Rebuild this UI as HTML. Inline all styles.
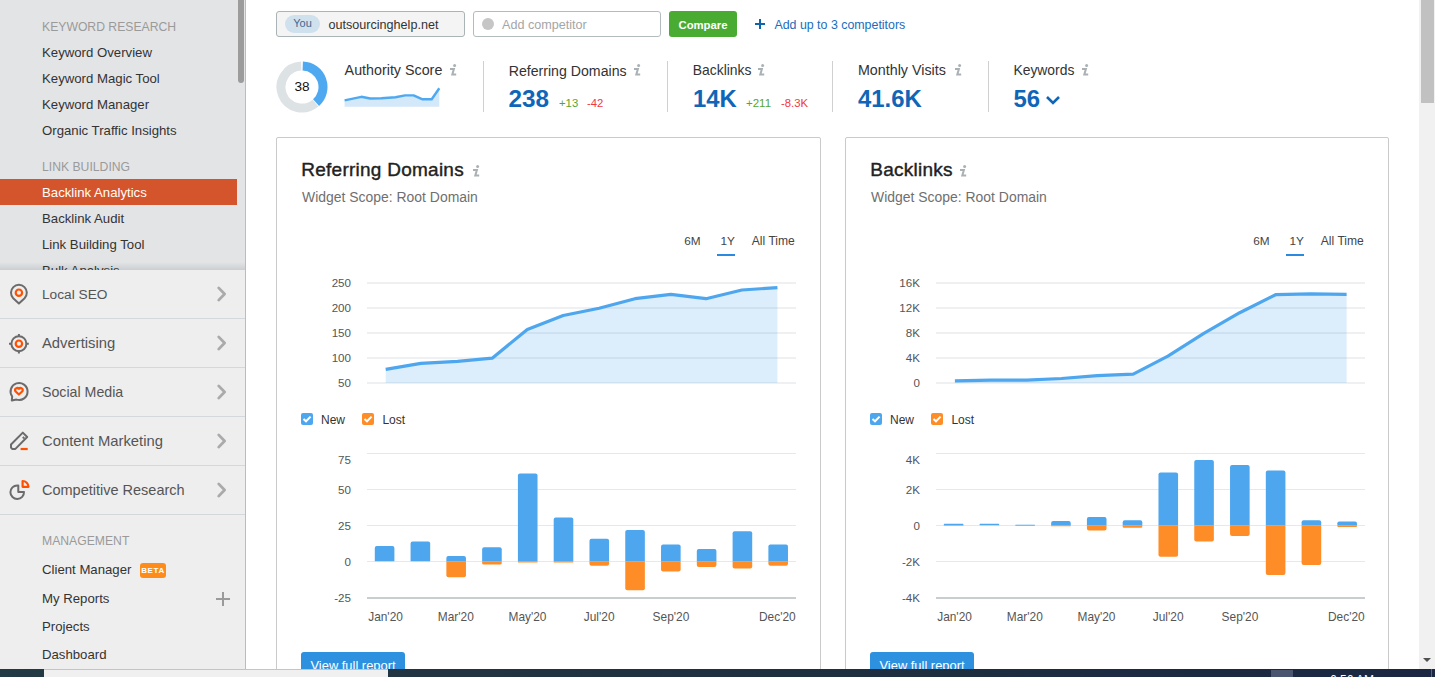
<!DOCTYPE html>
<html><head><meta charset="utf-8"><title>Backlink Analytics</title>
<style>
html,body{margin:0;padding:0;}
body{width:1435px;height:677px;overflow:hidden;position:relative;background:#fff;font-family:"Liberation Sans", sans-serif;}
.t{position:absolute;white-space:nowrap;line-height:1;}
</style></head><body>
<div style="position:absolute;left:0px;top:0px;width:245px;height:669px;background:#eeeeee;"></div>
<div style="position:absolute;left:0px;top:0px;width:245px;height:270px;background:#e3e4e6;"></div>
<div style="position:absolute;left:0px;top:262px;width:245px;height:8px;background:linear-gradient(rgba(200,205,208,0),rgba(195,200,203,0.75));"></div>
<div style="position:absolute;left:245px;top:0px;width:1px;height:669px;background:#bcbcbc;"></div>
<div style="position:absolute;left:238px;top:0px;width:6px;height:83px;background:#9c9c9c;border-radius:0 0 3px 3px;"></div>
<div class="t" style="left:42.00px;top:21.17px;font-size:12.2px;color:#9a9a9a;font-weight:400;font-family:'Liberation Sans', sans-serif;">KEYWORD RESEARCH</div>
<div class="t" style="left:42.00px;top:46.33px;font-size:13.2px;color:#333333;font-weight:400;font-family:'Liberation Sans', sans-serif;">Keyword Overview</div>
<div class="t" style="left:42.00px;top:72.33px;font-size:13.2px;color:#333333;font-weight:400;font-family:'Liberation Sans', sans-serif;">Keyword Magic Tool</div>
<div class="t" style="left:42.00px;top:98.33px;font-size:13.2px;color:#333333;font-weight:400;font-family:'Liberation Sans', sans-serif;">Keyword Manager</div>
<div class="t" style="left:42.00px;top:124.33px;font-size:13.2px;color:#333333;font-weight:400;font-family:'Liberation Sans', sans-serif;">Organic Traffic Insights</div>
<div class="t" style="left:42.00px;top:161.17px;font-size:12.2px;color:#9a9a9a;font-weight:400;font-family:'Liberation Sans', sans-serif;">LINK BUILDING</div>
<div style="position:absolute;left:0px;top:179px;width:237px;height:26px;background:#d4552b;"></div>
<div class="t" style="left:42.00px;top:185.83px;font-size:13.2px;color:#ffffff;font-weight:400;font-family:'Liberation Sans', sans-serif;">Backlink Analytics</div>
<div class="t" style="left:42.00px;top:212.33px;font-size:13.2px;color:#333333;font-weight:400;font-family:'Liberation Sans', sans-serif;">Backlink Audit</div>
<div class="t" style="left:42.00px;top:238.33px;font-size:13.2px;color:#333333;font-weight:400;font-family:'Liberation Sans', sans-serif;">Link Building Tool</div>
<div style="position:absolute;left:0;top:262px;width:237px;height:8px;overflow:hidden"><div class="t" style="left:42px;top:1.83px;font-size:13.2px;color:#333">Bulk Analysis</div></div>
<div class="t" style="left:42.00px;top:287.90px;font-size:13.7px;color:#555555;font-weight:400;font-family:'Liberation Sans', sans-serif;">Local SEO</div>
<div style="position:absolute;left:0px;top:318px;width:245px;height:1px;background:#d3d8db;"></div>
<svg style="position:absolute;left:210px;top:284px" width="24" height="20" viewBox="0 0 24 20"><path d="M8.7 3.9 L14.6 10 L8.7 16.1" fill="none" stroke="#aaaaaa" stroke-width="2.8" stroke-linecap="round" stroke-linejoin="round"/></svg>
<div class="t" style="left:42.00px;top:335.97px;font-size:14.8px;color:#555555;font-weight:400;font-family:'Liberation Sans', sans-serif;">Advertising</div>
<div style="position:absolute;left:0px;top:367px;width:245px;height:1px;background:#d3d8db;"></div>
<svg style="position:absolute;left:210px;top:333px" width="24" height="20" viewBox="0 0 24 20"><path d="M8.7 3.9 L14.6 10 L8.7 16.1" fill="none" stroke="#aaaaaa" stroke-width="2.8" stroke-linecap="round" stroke-linejoin="round"/></svg>
<div class="t" style="left:42.00px;top:385.48px;font-size:14.2px;color:#555555;font-weight:400;font-family:'Liberation Sans', sans-serif;">Social Media</div>
<div style="position:absolute;left:0px;top:416px;width:245px;height:1px;background:#d3d8db;"></div>
<svg style="position:absolute;left:210px;top:382px" width="24" height="20" viewBox="0 0 24 20"><path d="M8.7 3.9 L14.6 10 L8.7 16.1" fill="none" stroke="#aaaaaa" stroke-width="2.8" stroke-linecap="round" stroke-linejoin="round"/></svg>
<div class="t" style="left:42.00px;top:433.97px;font-size:14.8px;color:#555555;font-weight:400;font-family:'Liberation Sans', sans-serif;">Content Marketing</div>
<div style="position:absolute;left:0px;top:465px;width:245px;height:1px;background:#d3d8db;"></div>
<svg style="position:absolute;left:210px;top:431px" width="24" height="20" viewBox="0 0 24 20"><path d="M8.7 3.9 L14.6 10 L8.7 16.1" fill="none" stroke="#aaaaaa" stroke-width="2.8" stroke-linecap="round" stroke-linejoin="round"/></svg>
<div class="t" style="left:42.00px;top:483.23px;font-size:14.5px;color:#555555;font-weight:400;font-family:'Liberation Sans', sans-serif;">Competitive Research</div>
<div style="position:absolute;left:0px;top:514px;width:245px;height:1px;background:#d3d8db;"></div>
<svg style="position:absolute;left:210px;top:480px" width="24" height="20" viewBox="0 0 24 20"><path d="M8.7 3.9 L14.6 10 L8.7 16.1" fill="none" stroke="#aaaaaa" stroke-width="2.8" stroke-linecap="round" stroke-linejoin="round"/></svg>
<svg style="position:absolute;left:0;top:270px" width="40" height="49" viewBox="0 0 40 49"><path d="M18.9 33.5 L13.2 28.2 A7.9 7.9 0 1 1 24.6 28.2 Z" fill="none" stroke="#6b6b6b" stroke-width="2" stroke-linejoin="round"/><circle cx="18.9" cy="22.7" r="3.2" fill="none" stroke="#ff5000" stroke-width="2.2"/></svg>
<svg style="position:absolute;left:0;top:319px" width="40" height="49" viewBox="0 0 40 49"><circle cx="18.9" cy="24.7" r="7.5" fill="none" stroke="#6b6b6b" stroke-width="2"/><path d="M18.9 15 V18 M18.9 31.5 V34.5 M9 24.7 H12 M25.8 24.7 H28.8" stroke="#6b6b6b" stroke-width="2"/><circle cx="18.9" cy="24.7" r="3.2" fill="none" stroke="#ff5000" stroke-width="2.2"/></svg>
<svg style="position:absolute;left:0;top:367px" width="40" height="49" viewBox="0 0 40 49"><path d="M12.2 29.5 A8.5 8.5 0 1 1 16.5 32.6 L11.8 33.6 Z" fill="none" stroke="#6b6b6b" stroke-width="2" stroke-linejoin="round"/><path d="M18.9 27.5 L15.4 24.2 A2.1 2.1 0 0 1 18.9 21.9 A2.1 2.1 0 0 1 22.4 24.2 Z" fill="none" stroke="#ff5000" stroke-width="2.2" stroke-linejoin="round"/></svg>
<svg style="position:absolute;left:0;top:417px" width="40" height="49" viewBox="0 0 40 49"><path d="M11 30.5 L11 27.5 L22.8 15.6 L27.2 20 L15.4 31.9 L12.2 31.9 Z M22.8 20 L24.2 21.4" fill="none" stroke="#6b6b6b" stroke-width="2" stroke-linejoin="round"/><path d="M20.6 32 H27.7" stroke="#ff5000" stroke-width="2.2"/></svg>
<svg style="position:absolute;left:0;top:466px" width="40" height="49" viewBox="0 0 40 49"><path d="M17.3 19.4 A6.8 6.8 0 1 0 24 25.9 L18.3 25.9 L18.3 19.4 Z" fill="none" stroke="#6b6b6b" stroke-width="2" stroke-linejoin="round"/><path d="M22.6 15 A6 6 0 0 1 28.5 20.8 L22.6 20.8 Z" fill="none" stroke="#ff5000" stroke-width="2.2" stroke-linejoin="round"/></svg>
<div class="t" style="left:42.00px;top:535.17px;font-size:12.2px;color:#9a9a9a;font-weight:400;font-family:'Liberation Sans', sans-serif;">MANAGEMENT</div>
<div class="t" style="left:42.00px;top:563.03px;font-size:13.2px;color:#333333;font-weight:400;font-family:'Liberation Sans', sans-serif;">Client Manager</div>
<div style="position:absolute;left:140px;top:563px;width:26px;height:15px;background:#ff8c1a;border-radius:3px;color:#fff;font-family:'Liberation Sans';font-weight:700;font-size:8px;line-height:15px;text-align:center;letter-spacing:0.6px">BETA</div>
<div class="t" style="left:42.00px;top:592.13px;font-size:13.2px;color:#333333;font-weight:400;font-family:'Liberation Sans', sans-serif;">My Reports</div>
<div style="position:absolute;left:215.5px;top:597.5px;width:14px;height:2px;background:#9a9a9a;"></div>
<div style="position:absolute;left:221.5px;top:591.5px;width:2px;height:14px;background:#9a9a9a;"></div>
<div class="t" style="left:42.00px;top:620.33px;font-size:13.2px;color:#333333;font-weight:400;font-family:'Liberation Sans', sans-serif;">Projects</div>
<div class="t" style="left:42.00px;top:648.33px;font-size:13.2px;color:#333333;font-weight:400;font-family:'Liberation Sans', sans-serif;">Dashboard</div>
<div style="position:absolute;left:276px;top:11px;width:187px;height:24px;background:#f4f4f4;border:1px solid #aab3b6;border-radius:3px;"></div>
<div style="position:absolute;left:285px;top:15px;width:35px;height:18px;background:#d0e1ee;border-radius:9px;"></div>
<div class="t" style="left:302.50px;transform:translateX(-50%);top:18.19px;font-size:11px;color:#41688f;font-weight:400;font-family:'Liberation Sans', sans-serif;">You</div>
<div class="t" style="left:328.50px;top:19.03px;font-size:12.6px;color:#333;font-weight:400;font-family:'Liberation Sans', sans-serif;">outsourcinghelp.net</div>
<div style="position:absolute;left:473px;top:11px;width:186px;height:24px;background:#fff;border:1px solid #b4bbbe;border-radius:3px;"></div>
<div style="position:absolute;left:482px;top:18px;width:12px;height:12px;border-radius:50%;background:#c6c6c6"></div>
<div class="t" style="left:502.00px;top:19.03px;font-size:12.6px;color:#a5a5a5;font-weight:400;font-family:'Liberation Sans', sans-serif;">Add competitor</div>
<div style="position:absolute;left:669px;top:11px;width:68px;height:26px;background:#4aab33;border-radius:3px;"></div>
<div class="t" style="left:703.00px;transform:translateX(-50%);top:19.93px;font-size:11.3px;color:#ffffff;font-weight:700;font-family:'Liberation Sans', sans-serif;">Compare</div>
<div style="position:absolute;left:755px;top:23px;width:10px;height:2px;background:#0e63ad;"></div>
<div style="position:absolute;left:759px;top:19px;width:2px;height:10px;background:#0e63ad;"></div>
<div class="t" style="left:774.40px;top:19.10px;font-size:12.4px;color:#1a6dbd;font-weight:400;font-family:'Liberation Sans', sans-serif;">Add up to 3 competitors</div>
<svg style="position:absolute;left:276px;top:61px" width="52" height="52" viewBox="0 0 52 52"><path d="M39.50 42.09 A21 21 0 1 1 25.27 5.01" fill="none" stroke="#dde2e5" stroke-width="9"/><path d="M26.73 5.01 A21 21 0 0 1 40.05 41.61" fill="none" stroke="#4fa9f1" stroke-width="9"/></svg>
<div class="t" style="left:302.00px;transform:translateX(-50%);top:80.49px;font-size:13.6px;color:#111;font-weight:400;font-family:'Liberation Sans', sans-serif;">38</div>
<div class="t" style="left:344.60px;top:63.40px;font-size:14.3px;color:#333;font-weight:400;font-family:'Liberation Sans', sans-serif;">Authority Score</div>
<svg style="position:absolute;left:450px;top:64px" width="8" height="12" viewBox="0 0 8 12"><circle cx="4.6" cy="1.6" r="1.5" fill="#a9b1b4"/><path d="M0 5.1 H3.9 L2.3 10.5 H6.2" fill="none" stroke="#a9b1b4" stroke-width="2"/></svg>
<svg style="position:absolute;left:340px;top:80px" width="110" height="30"><polygon points="4.6,20.3 21.3,16.8 30.3,18.5 41.5,18.2 55.4,17.2 65.2,15.4 73.6,15.4 82.6,19.3 91.7,19.3 99.3,8.2 99.3,26.8 4.6,26.8" fill="#d3e8f8"/><polyline points="4.6,20.3 21.3,16.8 30.3,18.5 41.5,18.2 55.4,17.2 65.2,15.4 73.6,15.4 82.6,19.3 91.7,19.3 99.3,8.2" fill="none" stroke="#4fa9f1" stroke-width="2.4" stroke-linejoin="round"/></svg>
<div style="position:absolute;left:483px;top:61px;width:1px;height:51px;background:#d0d0d0;"></div>
<div style="position:absolute;left:667px;top:61px;width:1px;height:51px;background:#d0d0d0;"></div>
<div style="position:absolute;left:832px;top:61px;width:1px;height:51px;background:#d0d0d0;"></div>
<div style="position:absolute;left:988px;top:61px;width:1px;height:51px;background:#d0d0d0;"></div>
<div class="t" style="left:508.70px;top:63.52px;font-size:14.15px;color:#333;font-weight:400;font-family:'Liberation Sans', sans-serif;">Referring Domains</div>
<svg style="position:absolute;left:634px;top:64px" width="8" height="12" viewBox="0 0 8 12"><circle cx="4.6" cy="1.6" r="1.5" fill="#a9b1b4"/><path d="M0 5.1 H3.9 L2.3 10.5 H6.2" fill="none" stroke="#a9b1b4" stroke-width="2"/></svg>
<div class="t" style="left:508.50px;top:86.73px;font-size:24.3px;color:#0f66b8;font-weight:700;font-family:'Liberation Sans', sans-serif;">238</div>
<div class="t" style="left:559.00px;top:97.73px;font-size:11.3px;color:#55a630;font-weight:400;font-family:'Liberation Sans', sans-serif;">+13</div>
<div class="t" style="left:587.00px;top:97.73px;font-size:11.3px;color:#f0383f;font-weight:400;font-family:'Liberation Sans', sans-serif;">-42</div>
<div class="t" style="left:692.80px;top:63.73px;font-size:13.9px;color:#333;font-weight:400;font-family:'Liberation Sans', sans-serif;">Backlinks</div>
<svg style="position:absolute;left:758px;top:64px" width="8" height="12" viewBox="0 0 8 12"><circle cx="4.6" cy="1.6" r="1.5" fill="#a9b1b4"/><path d="M0 5.1 H3.9 L2.3 10.5 H6.2" fill="none" stroke="#a9b1b4" stroke-width="2"/></svg>
<div class="t" style="left:693.00px;top:87.15px;font-size:23.8px;color:#0f66b8;font-weight:700;font-family:'Liberation Sans', sans-serif;">14K</div>
<div class="t" style="left:746.00px;top:97.57px;font-size:11.5px;color:#55a630;font-weight:400;font-family:'Liberation Sans', sans-serif;">+211</div>
<div class="t" style="left:781.00px;top:97.73px;font-size:11.3px;color:#f0383f;font-weight:400;font-family:'Liberation Sans', sans-serif;">-8.3K</div>
<div class="t" style="left:857.90px;top:63.40px;font-size:14.3px;color:#333;font-weight:400;font-family:'Liberation Sans', sans-serif;">Monthly Visits</div>
<svg style="position:absolute;left:955px;top:64px" width="8" height="12" viewBox="0 0 8 12"><circle cx="4.6" cy="1.6" r="1.5" fill="#a9b1b4"/><path d="M0 5.1 H3.9 L2.3 10.5 H6.2" fill="none" stroke="#a9b1b4" stroke-width="2"/></svg>
<div class="t" style="left:858.00px;top:87.07px;font-size:23.9px;color:#0f66b8;font-weight:700;font-family:'Liberation Sans', sans-serif;">41.6K</div>
<div class="t" style="left:1013.40px;top:63.73px;font-size:13.9px;color:#333;font-weight:400;font-family:'Liberation Sans', sans-serif;">Keywords</div>
<svg style="position:absolute;left:1082px;top:64px" width="8" height="12" viewBox="0 0 8 12"><circle cx="4.6" cy="1.6" r="1.5" fill="#a9b1b4"/><path d="M0 5.1 H3.9 L2.3 10.5 H6.2" fill="none" stroke="#a9b1b4" stroke-width="2"/></svg>
<div class="t" style="left:1013.50px;top:87.07px;font-size:23.9px;color:#0f66b8;font-weight:700;font-family:'Liberation Sans', sans-serif;">56</div>
<svg style="position:absolute;left:1045px;top:94px" width="16" height="12"><path d="M2 3 L8 9 L14 3" fill="none" stroke="#0f66b8" stroke-width="2.6"/></svg>
<div style="position:absolute;left:276px;top:137px;width:545px;height:560px;background:#fff;border:1px solid #cacaca;border-radius:2px;box-sizing:border-box;"></div>
<div class="t" style="left:301.30px;top:159.62px;font-size:19px;color:#222;font-weight:400;font-family:'Liberation Sans', sans-serif;-webkit-text-stroke:0.4px #222;letter-spacing:0.25px;">Referring Domains</div>
<svg style="position:absolute;left:473px;top:165px" width="8" height="12" viewBox="0 0 8 12"><circle cx="4.6" cy="1.6" r="1.5" fill="#a9b1b4"/><path d="M0 5.1 H3.9 L2.3 10.5 H6.2" fill="none" stroke="#a9b1b4" stroke-width="2"/></svg>
<div class="t" style="left:302.00px;top:190.99px;font-size:13.95px;color:#6f6f6f;font-weight:400;font-family:'Liberation Sans', sans-serif;">Widget Scope: Root Domain</div>
<div class="t" style="left:684.30px;top:235.51px;font-size:11.8px;color:#444;font-weight:400;font-family:'Liberation Sans', sans-serif;">6M</div>
<div class="t" style="left:720.40px;top:235.51px;font-size:11.8px;color:#444;font-weight:400;font-family:'Liberation Sans', sans-serif;">1Y</div>
<div class="t" style="left:751.80px;top:235.26px;font-size:12.1px;color:#444;font-weight:400;font-family:'Liberation Sans', sans-serif;">All Time</div>
<div style="position:absolute;left:717px;top:254px;width:18px;height:2px;background:#2b8ae0;"></div>
<div style="position:absolute;left:367px;top:282px;width:429px;height:2px;background:#eef0f1;"></div>
<div class="t" style="right:1084.00px;top:276.88px;font-size:11.6px;color:#555;font-weight:400;font-family:'Liberation Sans', sans-serif;">250</div>
<div style="position:absolute;left:367px;top:307px;width:429px;height:2px;background:#eef0f1;"></div>
<div class="t" style="right:1084.00px;top:301.88px;font-size:11.6px;color:#555;font-weight:400;font-family:'Liberation Sans', sans-serif;">200</div>
<div style="position:absolute;left:367px;top:332px;width:429px;height:2px;background:#eef0f1;"></div>
<div class="t" style="right:1084.00px;top:326.88px;font-size:11.6px;color:#555;font-weight:400;font-family:'Liberation Sans', sans-serif;">150</div>
<div style="position:absolute;left:367px;top:357px;width:429px;height:2px;background:#eef0f1;"></div>
<div class="t" style="right:1084.00px;top:351.88px;font-size:11.6px;color:#555;font-weight:400;font-family:'Liberation Sans', sans-serif;">100</div>
<div style="position:absolute;left:367px;top:382px;width:429px;height:2px;background:#eef0f1;"></div>
<div class="t" style="right:1084.00px;top:376.88px;font-size:11.6px;color:#555;font-weight:400;font-family:'Liberation Sans', sans-serif;">50</div>
<svg style="position:absolute;left:276px;top:270px" width="540" height="120"><polygon points="109.7,99.3 144.8,93.3 181.5,91.4 216.2,88.2 251.3,59.4 287.2,45.5 323.1,38.3 359.0,28.7 394.9,24.3 430.0,28.7 465.9,20.0 501.4,17.6 501.4,113 109.7,113" fill="#4ea6ee" fill-opacity="0.2"/><polyline points="109.7,99.3 144.8,93.3 181.5,91.4 216.2,88.2 251.3,59.4 287.2,45.5 323.1,38.3 359.0,28.7 394.9,24.3 430.0,28.7 465.9,20.0 501.4,17.6" fill="none" stroke="#4ea6ee" stroke-width="3.2" stroke-linejoin="round" stroke-linecap="butt"/></svg>
<svg width="12" height="12" viewBox="0 0 12 12" style="position:absolute;left:301px;top:412.6px"><rect width="12" height="12" rx="2" fill="#4ea6ee"/><path d="M2.5 6 L5 8.3 L9.6 3.6" fill="none" stroke="#fff" stroke-width="2"/></svg>
<div class="t" style="left:321.00px;top:414.34px;font-size:12px;color:#333;font-weight:400;font-family:'Liberation Sans', sans-serif;">New</div>
<svg width="12" height="12" viewBox="0 0 12 12" style="position:absolute;left:362px;top:412.6px"><rect width="12" height="12" rx="2" fill="#ff8d27"/><path d="M2.5 6 L5 8.3 L9.6 3.6" fill="none" stroke="#fff" stroke-width="2"/></svg>
<div class="t" style="left:382.40px;top:414.34px;font-size:12px;color:#333;font-weight:400;font-family:'Liberation Sans', sans-serif;">Lost</div>
<div style="position:absolute;left:367px;top:453px;width:429px;height:1px;background:#e6e9eb;"></div>
<div class="t" style="right:1084.00px;top:454.18px;font-size:11.6px;color:#555;font-weight:400;font-family:'Liberation Sans', sans-serif;">75</div>
<div style="position:absolute;left:367px;top:489px;width:429px;height:1px;background:#e6e9eb;"></div>
<div class="t" style="right:1084.00px;top:483.88px;font-size:11.6px;color:#555;font-weight:400;font-family:'Liberation Sans', sans-serif;">50</div>
<div style="position:absolute;left:367px;top:525px;width:429px;height:1px;background:#e6e9eb;"></div>
<div class="t" style="right:1084.00px;top:519.88px;font-size:11.6px;color:#555;font-weight:400;font-family:'Liberation Sans', sans-serif;">25</div>
<div style="position:absolute;left:367px;top:561px;width:429px;height:1px;background:#e6e9eb;"></div>
<div class="t" style="right:1084.00px;top:555.88px;font-size:11.6px;color:#555;font-weight:400;font-family:'Liberation Sans', sans-serif;">0</div>
<div style="position:absolute;left:367px;top:597px;width:429px;height:2px;background:#c8cdd0;"></div>
<div class="t" style="right:1084.00px;top:591.88px;font-size:11.6px;color:#555;font-weight:400;font-family:'Liberation Sans', sans-serif;">-25</div>
<svg style="position:absolute;left:276px;top:440px" width="540" height="170"><path d="M98.80 121.30 V108.10 Q98.80 106.10 100.80 106.10 H116.40 Q118.40 106.10 118.40 108.10 V121.30 Z" fill="#4ea6ee"/><path d="M134.58 121.30 V103.60 Q134.58 101.60 136.58 101.60 H152.18 Q154.18 101.60 154.18 103.60 V121.30 Z" fill="#4ea6ee"/><path d="M170.36 121.30 V117.90 Q170.36 115.90 172.36 115.90 H187.96 Q189.96 115.90 189.96 117.90 V121.30 Z" fill="#4ea6ee"/><path d="M170.36 121.30 V135.20 Q170.36 137.20 172.36 137.20 H187.96 Q189.96 137.20 189.96 135.20 V121.30 Z" fill="#ff8d27"/><path d="M206.14 121.30 V109.30 Q206.14 107.30 208.14 107.30 H223.74 Q225.74 107.30 225.74 109.30 V121.30 Z" fill="#4ea6ee"/><path d="M206.14 121.30 V122.90 Q206.14 124.50 207.74 124.50 H224.14 Q225.74 124.50 225.74 122.90 V121.30 Z" fill="#ff8d27"/><path d="M241.92 121.30 V35.60 Q241.92 33.60 243.92 33.60 H259.52 Q261.52 33.60 261.52 35.60 V121.30 Z" fill="#4ea6ee"/><path d="M241.92 121.30 V121.95 Q241.92 122.60 242.57 122.60 H260.87 Q261.52 122.60 261.52 121.95 V121.30 Z" fill="#ff8d27"/><path d="M277.70 121.30 V79.40 Q277.70 77.40 279.70 77.40 H295.30 Q297.30 77.40 297.30 79.40 V121.30 Z" fill="#4ea6ee"/><path d="M277.70 121.30 V121.95 Q277.70 122.60 278.35 122.60 H296.65 Q297.30 122.60 297.30 121.95 V121.30 Z" fill="#ff8d27"/><path d="M313.48 121.30 V100.70 Q313.48 98.70 315.48 98.70 H331.08 Q333.08 98.70 333.08 100.70 V121.30 Z" fill="#4ea6ee"/><path d="M313.48 121.30 V123.70 Q313.48 125.70 315.48 125.70 H331.08 Q333.08 125.70 333.08 123.70 V121.30 Z" fill="#ff8d27"/><path d="M349.26 121.30 V92.10 Q349.26 90.10 351.26 90.10 H366.86 Q368.86 90.10 368.86 92.10 V121.30 Z" fill="#4ea6ee"/><path d="M349.26 121.30 V148.30 Q349.26 150.30 351.26 150.30 H366.86 Q368.86 150.30 368.86 148.30 V121.30 Z" fill="#ff8d27"/><path d="M385.04 121.30 V106.40 Q385.04 104.40 387.04 104.40 H402.64 Q404.64 104.40 404.64 106.40 V121.30 Z" fill="#4ea6ee"/><path d="M385.04 121.30 V129.40 Q385.04 131.40 387.04 131.40 H402.64 Q404.64 131.40 404.64 129.40 V121.30 Z" fill="#ff8d27"/><path d="M420.82 121.30 V110.90 Q420.82 108.90 422.82 108.90 H438.42 Q440.42 108.90 440.42 110.90 V121.30 Z" fill="#4ea6ee"/><path d="M420.82 121.30 V124.90 Q420.82 126.90 422.82 126.90 H438.42 Q440.42 126.90 440.42 124.90 V121.30 Z" fill="#ff8d27"/><path d="M456.60 121.30 V93.30 Q456.60 91.30 458.60 91.30 H474.20 Q476.20 91.30 476.20 93.30 V121.30 Z" fill="#4ea6ee"/><path d="M456.60 121.30 V126.60 Q456.60 128.60 458.60 128.60 H474.20 Q476.20 128.60 476.20 126.60 V121.30 Z" fill="#ff8d27"/><path d="M492.38 121.30 V106.40 Q492.38 104.40 494.38 104.40 H509.98 Q511.98 104.40 511.98 106.40 V121.30 Z" fill="#4ea6ee"/><path d="M492.38 121.30 V123.70 Q492.38 125.70 494.38 125.70 H509.98 Q511.98 125.70 511.98 123.70 V121.30 Z" fill="#ff8d27"/></svg>
<div class="t" style="left:368.20px;top:612.43px;font-size:11.9px;color:#555;font-weight:400;font-family:'Liberation Sans', sans-serif;">Jan'20</div>
<div class="t" style="left:437.80px;top:612.43px;font-size:11.9px;color:#555;font-weight:400;font-family:'Liberation Sans', sans-serif;">Mar'20</div>
<div class="t" style="left:508.50px;top:612.43px;font-size:11.9px;color:#555;font-weight:400;font-family:'Liberation Sans', sans-serif;">May'20</div>
<div class="t" style="left:583.80px;top:612.43px;font-size:11.9px;color:#555;font-weight:400;font-family:'Liberation Sans', sans-serif;">Jul'20</div>
<div class="t" style="left:652.60px;top:612.43px;font-size:11.9px;color:#555;font-weight:400;font-family:'Liberation Sans', sans-serif;">Sep'20</div>
<div class="t" style="left:759.00px;top:612.43px;font-size:11.9px;color:#555;font-weight:400;font-family:'Liberation Sans', sans-serif;">Dec'20</div>
<div style="position:absolute;left:301px;top:652px;width:104px;height:30px;background:#2d91df;border-radius:3px;"></div>
<div class="t" style="left:310.50px;top:660.08px;font-size:12.9px;color:#fff;font-weight:400;font-family:'Liberation Sans', sans-serif;">View full report</div>
<div style="position:absolute;left:845px;top:137px;width:544px;height:560px;background:#fff;border:1px solid #cacaca;border-radius:2px;box-sizing:border-box;"></div>
<div class="t" style="left:870.30px;top:159.62px;font-size:19px;color:#222;font-weight:400;font-family:'Liberation Sans', sans-serif;-webkit-text-stroke:0.4px #222;letter-spacing:0.25px;">Backlinks</div>
<svg style="position:absolute;left:960px;top:165px" width="8" height="12" viewBox="0 0 8 12"><circle cx="4.6" cy="1.6" r="1.5" fill="#a9b1b4"/><path d="M0 5.1 H3.9 L2.3 10.5 H6.2" fill="none" stroke="#a9b1b4" stroke-width="2"/></svg>
<div class="t" style="left:871.00px;top:190.99px;font-size:13.95px;color:#6f6f6f;font-weight:400;font-family:'Liberation Sans', sans-serif;">Widget Scope: Root Domain</div>
<div class="t" style="left:1253.30px;top:235.51px;font-size:11.8px;color:#444;font-weight:400;font-family:'Liberation Sans', sans-serif;">6M</div>
<div class="t" style="left:1289.40px;top:235.51px;font-size:11.8px;color:#444;font-weight:400;font-family:'Liberation Sans', sans-serif;">1Y</div>
<div class="t" style="left:1320.80px;top:235.26px;font-size:12.1px;color:#444;font-weight:400;font-family:'Liberation Sans', sans-serif;">All Time</div>
<div style="position:absolute;left:1286px;top:254px;width:18px;height:2px;background:#2b8ae0;"></div>
<div style="position:absolute;left:936px;top:282px;width:429px;height:2px;background:#eef0f1;"></div>
<div class="t" style="right:515.00px;top:276.88px;font-size:11.6px;color:#555;font-weight:400;font-family:'Liberation Sans', sans-serif;">16K</div>
<div style="position:absolute;left:936px;top:307px;width:429px;height:2px;background:#eef0f1;"></div>
<div class="t" style="right:515.00px;top:301.88px;font-size:11.6px;color:#555;font-weight:400;font-family:'Liberation Sans', sans-serif;">12K</div>
<div style="position:absolute;left:936px;top:332px;width:429px;height:2px;background:#eef0f1;"></div>
<div class="t" style="right:515.00px;top:326.88px;font-size:11.6px;color:#555;font-weight:400;font-family:'Liberation Sans', sans-serif;">8K</div>
<div style="position:absolute;left:936px;top:357px;width:429px;height:2px;background:#eef0f1;"></div>
<div class="t" style="right:515.00px;top:351.88px;font-size:11.6px;color:#555;font-weight:400;font-family:'Liberation Sans', sans-serif;">4K</div>
<div style="position:absolute;left:936px;top:382px;width:429px;height:2px;background:#eef0f1;"></div>
<div class="t" style="right:515.00px;top:376.88px;font-size:11.6px;color:#555;font-weight:400;font-family:'Liberation Sans', sans-serif;">0</div>
<svg style="position:absolute;left:845px;top:270px" width="540" height="120"><polygon points="109.9,110.9 145.8,110.1 181.7,110.1 216.4,108.5 252.3,105.7 288.2,104.1 322.9,86.2 358.8,63.4 394.7,42.7 430.6,24.7 465.7,23.9 501.6,24.3 501.6,113 109.9,113" fill="#4ea6ee" fill-opacity="0.2"/><polyline points="109.9,110.9 145.8,110.1 181.7,110.1 216.4,108.5 252.3,105.7 288.2,104.1 322.9,86.2 358.8,63.4 394.7,42.7 430.6,24.7 465.7,23.9 501.6,24.3" fill="none" stroke="#4ea6ee" stroke-width="3.2" stroke-linejoin="round" stroke-linecap="butt"/></svg>
<svg width="12" height="12" viewBox="0 0 12 12" style="position:absolute;left:870px;top:412.6px"><rect width="12" height="12" rx="2" fill="#4ea6ee"/><path d="M2.5 6 L5 8.3 L9.6 3.6" fill="none" stroke="#fff" stroke-width="2"/></svg>
<div class="t" style="left:890.00px;top:414.34px;font-size:12px;color:#333;font-weight:400;font-family:'Liberation Sans', sans-serif;">New</div>
<svg width="12" height="12" viewBox="0 0 12 12" style="position:absolute;left:931px;top:412.6px"><rect width="12" height="12" rx="2" fill="#ff8d27"/><path d="M2.5 6 L5 8.3 L9.6 3.6" fill="none" stroke="#fff" stroke-width="2"/></svg>
<div class="t" style="left:951.40px;top:414.34px;font-size:12px;color:#333;font-weight:400;font-family:'Liberation Sans', sans-serif;">Lost</div>
<div style="position:absolute;left:936px;top:453px;width:429px;height:1px;background:#e6e9eb;"></div>
<div class="t" style="right:515.00px;top:454.18px;font-size:11.6px;color:#555;font-weight:400;font-family:'Liberation Sans', sans-serif;">4K</div>
<div style="position:absolute;left:936px;top:489px;width:429px;height:1px;background:#e6e9eb;"></div>
<div class="t" style="right:515.00px;top:483.88px;font-size:11.6px;color:#555;font-weight:400;font-family:'Liberation Sans', sans-serif;">2K</div>
<div style="position:absolute;left:936px;top:525px;width:429px;height:1px;background:#e6e9eb;"></div>
<div class="t" style="right:515.00px;top:519.88px;font-size:11.6px;color:#555;font-weight:400;font-family:'Liberation Sans', sans-serif;">0</div>
<div style="position:absolute;left:936px;top:561px;width:429px;height:1px;background:#e6e9eb;"></div>
<div class="t" style="right:515.00px;top:555.88px;font-size:11.6px;color:#555;font-weight:400;font-family:'Liberation Sans', sans-serif;">-2K</div>
<div style="position:absolute;left:936px;top:597px;width:429px;height:2px;background:#c8cdd0;"></div>
<div class="t" style="right:515.00px;top:591.88px;font-size:11.6px;color:#555;font-weight:400;font-family:'Liberation Sans', sans-serif;">-4K</div>
<svg style="position:absolute;left:845px;top:440px" width="540" height="170"><path d="M98.80 85.20 V84.50 Q98.80 83.80 99.50 83.80 H117.70 Q118.40 83.80 118.40 84.50 V85.20 Z" fill="#4ea6ee"/><path d="M98.80 85.20 V85.50 Q98.80 85.80 99.10 85.80 H118.10 Q118.40 85.80 118.40 85.50 V85.20 Z" fill="#ff8d27"/><path d="M134.58 85.20 V84.50 Q134.58 83.80 135.28 83.80 H153.48 Q154.18 83.80 154.18 84.50 V85.20 Z" fill="#4ea6ee"/><path d="M170.36 85.20 V85.00 Q170.36 84.80 170.56 84.80 H189.76 Q189.96 84.80 189.96 85.00 V85.20 Z" fill="#4ea6ee"/><path d="M170.36 85.20 V85.60 Q170.36 86.00 170.76 86.00 H189.56 Q189.96 86.00 189.96 85.60 V85.20 Z" fill="#ff8d27"/><path d="M206.14 85.20 V83.10 Q206.14 81.10 208.14 81.10 H223.74 Q225.74 81.10 225.74 83.10 V85.20 Z" fill="#4ea6ee"/><path d="M206.14 85.20 V85.70 Q206.14 86.20 206.64 86.20 H225.24 Q225.74 86.20 225.74 85.70 V85.20 Z" fill="#ff8d27"/><path d="M241.92 85.20 V78.90 Q241.92 76.90 243.92 76.90 H259.52 Q261.52 76.90 261.52 78.90 V85.20 Z" fill="#4ea6ee"/><path d="M241.92 85.20 V88.60 Q241.92 90.60 243.92 90.60 H259.52 Q261.52 90.60 261.52 88.60 V85.20 Z" fill="#ff8d27"/><path d="M277.70 85.20 V82.20 Q277.70 80.20 279.70 80.20 H295.30 Q297.30 80.20 297.30 82.20 V85.20 Z" fill="#4ea6ee"/><path d="M277.70 85.20 V86.45 Q277.70 87.70 278.95 87.70 H296.05 Q297.30 87.70 297.30 86.45 V85.20 Z" fill="#ff8d27"/><path d="M313.48 85.20 V34.60 Q313.48 32.60 315.48 32.60 H331.08 Q333.08 32.60 333.08 34.60 V85.20 Z" fill="#4ea6ee"/><path d="M313.48 85.20 V114.70 Q313.48 116.70 315.48 116.70 H331.08 Q333.08 116.70 333.08 114.70 V85.20 Z" fill="#ff8d27"/><path d="M349.26 85.20 V22.10 Q349.26 20.10 351.26 20.10 H366.86 Q368.86 20.10 368.86 22.10 V85.20 Z" fill="#4ea6ee"/><path d="M349.26 85.20 V99.40 Q349.26 101.40 351.26 101.40 H366.86 Q368.86 101.40 368.86 99.40 V85.20 Z" fill="#ff8d27"/><path d="M385.04 85.20 V27.10 Q385.04 25.10 387.04 25.10 H402.64 Q404.64 25.10 404.64 27.10 V85.20 Z" fill="#4ea6ee"/><path d="M385.04 85.20 V94.00 Q385.04 96.00 387.04 96.00 H402.64 Q404.64 96.00 404.64 94.00 V85.20 Z" fill="#ff8d27"/><path d="M420.82 85.20 V32.50 Q420.82 30.50 422.82 30.50 H438.42 Q440.42 30.50 440.42 32.50 V85.20 Z" fill="#4ea6ee"/><path d="M420.82 85.20 V133.00 Q420.82 135.00 422.82 135.00 H438.42 Q440.42 135.00 440.42 133.00 V85.20 Z" fill="#ff8d27"/><path d="M456.60 85.20 V82.20 Q456.60 80.20 458.60 80.20 H474.20 Q476.20 80.20 476.20 82.20 V85.20 Z" fill="#4ea6ee"/><path d="M456.60 85.20 V123.00 Q456.60 125.00 458.60 125.00 H474.20 Q476.20 125.00 476.20 123.00 V85.20 Z" fill="#ff8d27"/><path d="M492.38 85.20 V83.35 Q492.38 81.50 494.23 81.50 H510.13 Q511.98 81.50 511.98 83.35 V85.20 Z" fill="#4ea6ee"/><path d="M492.38 85.20 V86.05 Q492.38 86.90 493.23 86.90 H511.13 Q511.98 86.90 511.98 86.05 V85.20 Z" fill="#ff8d27"/></svg>
<div class="t" style="left:937.20px;top:612.43px;font-size:11.9px;color:#555;font-weight:400;font-family:'Liberation Sans', sans-serif;">Jan'20</div>
<div class="t" style="left:1006.80px;top:612.43px;font-size:11.9px;color:#555;font-weight:400;font-family:'Liberation Sans', sans-serif;">Mar'20</div>
<div class="t" style="left:1077.50px;top:612.43px;font-size:11.9px;color:#555;font-weight:400;font-family:'Liberation Sans', sans-serif;">May'20</div>
<div class="t" style="left:1152.80px;top:612.43px;font-size:11.9px;color:#555;font-weight:400;font-family:'Liberation Sans', sans-serif;">Jul'20</div>
<div class="t" style="left:1221.60px;top:612.43px;font-size:11.9px;color:#555;font-weight:400;font-family:'Liberation Sans', sans-serif;">Sep'20</div>
<div class="t" style="left:1328.00px;top:612.43px;font-size:11.9px;color:#555;font-weight:400;font-family:'Liberation Sans', sans-serif;">Dec'20</div>
<div style="position:absolute;left:870px;top:652px;width:104px;height:30px;background:#2d91df;border-radius:3px;"></div>
<div class="t" style="left:879.50px;top:660.08px;font-size:12.9px;color:#fff;font-weight:400;font-family:'Liberation Sans', sans-serif;">View full report</div>
<div style="position:absolute;left:1419px;top:0px;width:16px;height:669px;background:#f1f1f1;"></div>
<div style="position:absolute;left:1421px;top:0px;width:13px;height:103px;background:#c1c1c1;"></div>
<svg style="position:absolute;left:1419px;top:654px" width="16" height="12"><path d="M4 4 H12 L8 8 Z" fill="#505050"/></svg>
<div style="position:absolute;left:0px;top:669px;width:1435px;height:8px;background:linear-gradient(90deg,#223a44 0%,#1f3140 50%,#1b2742 100%);"></div>
<div style="position:absolute;left:44px;top:669px;width:344px;height:8px;background:#f0f0f0;border-top:1px solid #c4c4c4;box-sizing:border-box;"></div>
<div style="position:absolute;left:1271px;top:670px;width:22px;height:7px;background:#4a5670;"></div>
<div style="position:absolute;left:1431px;top:669px;width:1px;height:8px;background:#5a6478;"></div>
<div class="t" style="left:1330.00px;top:674.34px;font-size:12px;color:#ffffff;font-weight:400;font-family:'Liberation Sans', sans-serif;">6:56 AM</div>
</body></html>
